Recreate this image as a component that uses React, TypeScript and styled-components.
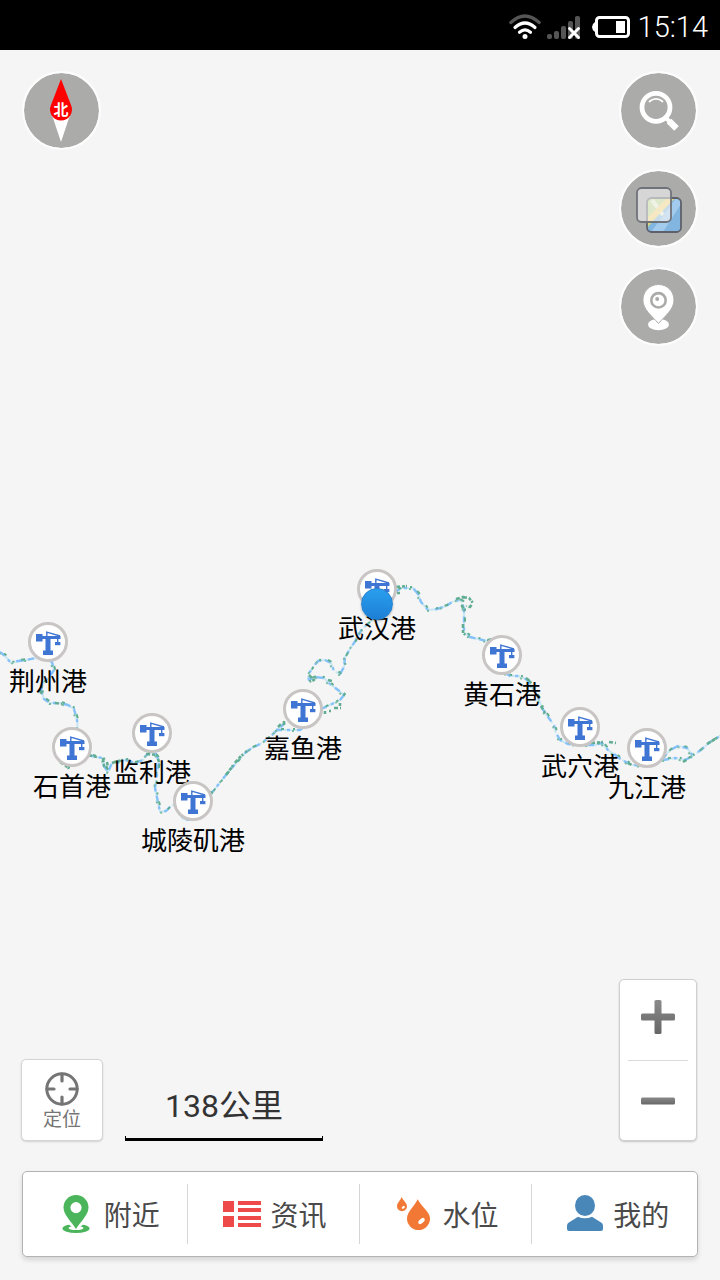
import React from "react";
import styled, { createGlobalStyle } from "styled-components";

const GlobalStyle = createGlobalStyle`
  *, *::before, *::after { box-sizing: border-box; }
  body {
    margin: 0;
    background: #f5f5f5;
    font-family: Roboto, "Noto Sans CJK SC", sans-serif;
  }
  button {
    margin: 0;
    padding: 0;
    border: 0;
    background: none;
    font: inherit;
    color: inherit;
    cursor: pointer;
  }
  svg { display: block; flex: none; }
`;

const Screen = styled.div`
  display: flex;
  flex-direction: column;
  min-height: 100vh;
`;

const StatusBar = styled.header`
  display: flex;
  align-items: center;
  justify-content: flex-end;
  height: 50px;
  padding: 4px 12px 0 0;
  background: #000;
  color: #fff;
`;

const StatusIcons = styled.div`
  display: flex;
  align-items: center;
  gap: 6px;
  margin-right: 8px;
`;

const Battery = styled.svg`
  margin-left: 5px;
`;

const Clock = styled.time`
  font-size: 29px;
  font-weight: 300;
  line-height: 36px;
`;

const MapArea = styled.main`
  position: relative;
  display: flex;
  flex: 1;
  flex-direction: column;
  justify-content: space-between;
  gap: 600px;
  padding: 21px 22px 23px;
  overflow: hidden;
`;

const MapCanvas = styled.div`
  position: absolute;
  top: 0;
  left: 50%;
  width: 720px;
  height: 100%;
  transform: translateX(-50%);
`;

const PortPin = styled.button<{ $x: number; $y: number }>`
  position: absolute;
  left: ${(p) => p.$x - 60}px;
  top: ${(p) => p.$y - 20}px;
  display: flex;
  flex-direction: column;
  align-items: center;
  width: 120px;
`;

const PortBadge = styled.span`
  display: block;
  border: 3px solid #c8c5c4;
  border-radius: 50%;
  background: #fff;
`;

const PortName = styled.span`
  font-size: 26px;
  line-height: 40px;
  white-space: nowrap;
  color: #000;
`;

const HereDot = styled.span<{ $x: number; $y: number }>`
  position: absolute;
  left: ${(p) => p.$x - 16}px;
  top: ${(p) => p.$y - 16}px;
  width: 32px;
  height: 32px;
  border: 1px solid #2483cf;
  border-radius: 50%;
  background: linear-gradient(#2a9fee, #1c7fd6);
  box-shadow: 0 1px 2px rgba(0, 0, 0, 0.3);
`;

const TopControls = styled.div`
  position: relative;
  display: flex;
  align-items: flex-start;
  justify-content: space-between;
`;

const ButtonStack = styled.div`
  display: flex;
  flex-direction: column;
  gap: 19px;
`;

const RoundButton = styled.button`
  width: 79px;
  height: 79px;
  border: 2px solid #fdfdfd;
  border-radius: 50%;
  background: #ababaa;
  background-clip: padding-box;
`;

const BottomControls = styled.div`
  position: relative;
  display: flex;
  flex-direction: column;
  gap: 30px;
`;

const ToolRow = styled.div`
  display: flex;
  align-items: flex-end;
  margin: 0 1px 0 -1px;
`;

const LocateButton = styled.button`
  display: flex;
  flex-direction: column;
  align-items: center;
  justify-content: center;
  gap: 2px;
  width: 82px;
  height: 82px;
  padding-top: 4px;
  border: 1px solid #d5d4d3;
  border-radius: 5px;
  background: #fff;
  box-shadow: 0 1px 2px rgba(0, 0, 0, 0.15);
  font-size: 19px;
  line-height: 24px;
  color: #757575;
`;

const ScaleBar = styled.div`
  width: 198px;
  margin-left: 22px;
  font-size: 32px;
  line-height: 40px;
  text-align: center;
  color: #333;
`;

const ScaleRule = styled.div`
  height: 5px;
  margin-top: 10px;
  border: solid #000;
  border-width: 0 1px 3px;
`;

const ZoomControl = styled.div`
  display: flex;
  flex-direction: column;
  width: 78px;
  margin-left: auto;
  padding: 0 8px;
  border: 1px solid #d0cfce;
  border-radius: 5px;
  background: #fff;
  box-shadow: 0 1px 2px rgba(0, 0, 0, 0.2);
`;

const ZoomButton = styled.button<{ $first?: boolean }>`
  display: flex;
  align-items: center;
  justify-content: center;
  height: 80px;
  padding-bottom: ${(p) => (p.$first ? 6 : 0)}px;

  & + & {
    border-top: 1px solid #d9d9d9;
  }
`;

const TabBar = styled.nav`
  display: grid;
  grid-template-columns: 164fr 172fr 172fr 166fr;
  align-items: center;
  height: 86px;
  border: 1px solid #b4b3b2;
  border-radius: 5px;
  background: #fff;
  box-shadow: 0 3px 5px rgba(0, 0, 0, 0.13);
`;

const Tab = styled.button`
  display: flex;
  align-items: center;
  gap: 8px;
  height: 60px;
  padding-left: 20%;
  font-size: 28px;
  line-height: 40px;
  white-space: nowrap;
  color: #4a4a4a;

  & + & {
    border-left: 1px solid #d6d6d6;
  }
`;

const TabLabel = styled.span`
  padding-top: 5px;
`;

type Port = { name: string; x: number; y: number };

const ports: Port[] = [
  { name: "荆州港", x: 48, y: 592 },
  { name: "石首港", x: 72, y: 697 },
  { name: "监利港", x: 152, y: 683 },
  { name: "城陵矶港", x: 193, y: 751 },
  { name: "嘉鱼港", x: 303, y: 659 },
  { name: "武汉港", x: 377, y: 539 },
  { name: "黄石港", x: 502, y: 605 },
  { name: "武穴港", x: 580, y: 677 },
  { name: "九江港", x: 647, y: 698 },
];

const riverReaches = [
  "M0 652 5 656 11 663 18 661 26 660 36 658 45 659 52 662 54 670 50 676 44 682 41 690 44 699 50 703 60 703 68 705 74 709 77 720 78 731",
  "M88 755 96 757 103 758 104 766 108 772 112 763 118 762 126 760 135 763 143 760 148 753 156 754 159 762 157 774 155 788 158 802 160 812 166 811 170 807 176 804",
  "M180 812 183 819 190 820",
  "M210 795 214 790 222 780 230 770 238 761 246 752 252 748 262 743 272 735 277 730 284 724",
  "M276 730 300 730 305 726",
  "M321 709 330 705 340 700 344 695 338 690 330 684 324 678 315 677 309 680 308 675 313 667 318 661 325 660 331 663 334 671 340 674 344 667 345 657 350 649 356 640 362 629 370 622 377 615",
  "M394 592 402 588 413 588 418 594 421 602 428 610 437 609 446 606 455 600 462 601 464 610 464 625 464 632 470 637 478 639 487 641 495 638",
  "M505 673 510 676 518 676 526 679 532 686 538 697 542 708 548 717 554 725 556 733 560 740 568 744 582 745 595 745 602 743 608 750 614 754 622 760 632 765 645 766 658 762 664 757 670 750 678 746 687 748 693 756 702 749 710 742 720 736",
  "M663 760 675 758 685 760 693 756",
];

const riverBanks = [
  "M60 762 65 765 68 768 73 765 M66 766H72",
  "M41 694 42 684 M55 703 62 704",
  "M88 755 97 757 M103 758 104 766 108 768 107 762 M112 763 122 760 122 764 M146 754 157 755 159 762",
  "M210 792 213 793 M226 775 234 764 240 757 247 751 M278 727 282 723 M284 721V725",
  "M309 675 314 680 308 682 M328 680 332 681 M334 708H341 M340 703V706 M325 714V711 M329 711H331",
  "M396 587 407 586 M397 593H400 M456 599 463 597 463 601 462 606 465 611 M463 597 469 598 473 603 470 607 466 606 M463 624V633L467 636",
  "M526 678 531 682 M541 706 545 713 M591 743 605 742 M609 742 616 743 M628 763 632 765",
  "M683 762 688 759 M707 744 720 736",
];

function River() {
  return (
    <svg
      width="720"
      height="850"
      viewBox="0 50 720 850"
      fill="none"
      strokeLinejoin="round"
      aria-hidden="true"
    >
      {riverReaches.map((d) => (
        <g key={d}>
          <path d={d} stroke="#c8e6f4" strokeWidth="2" strokeDasharray="16 2 9 2" />
          <path d={d} stroke="#86c2fa" strokeWidth="2.400" strokeDasharray="6 5 3 7 8 4" />
          <path
            d={d}
            stroke="#5fae90"
            strokeWidth="2"
            strokeDasharray="3 9 2 7 4 13"
            strokeDashoffset="-4"
            transform="translate(1 -1)"
          />
          <path
            d={d}
            stroke="#78bba3"
            strokeWidth="2"
            strokeDasharray="2 15 2 11"
            transform="translate(-1 1)"
          />
        </g>
      ))}
      {riverBanks.map((d) => (
        <path key={d} d={d} stroke="#62ad92" strokeWidth="2.600" strokeDasharray="4 2 3 1 2 3" />
      ))}
    </svg>
  );
}

function CraneIcon() {
  return (
    <svg width="34" height="34" viewBox="0 0 34 34" fill="#3f75d3" aria-hidden="true">
      <rect x="5" y="9" width="6.500" height="7.500" />
      <rect x="11" y="11" width="18.500" height="3" />
      <path d="M15.800 11V7.200L29 11" fill="none" stroke="#3f75d3" strokeWidth="1.400" />
      <rect x="14.500" y="11" width="5" height="15" />
      <rect x="12" y="25.500" width="10" height="4.500" />
      <rect x="26" y="13" width="1.400" height="5" />
      <rect x="24" y="17" width="5.400" height="3.200" />
    </svg>
  );
}

function CompassIcon() {
  return (
    <svg width="75" height="75" viewBox="0 0 75 75" aria-hidden="true">
      <path d="M28 42 37 69 46 42z" fill="#fff" />
      <path d="M37 6 27 32a11 11 0 1 0 20 0z" fill="#f00" />
      <text x="37" y="42" fontSize="15" fontWeight="700" textAnchor="middle" fill="#fff">
        北
      </text>
    </svg>
  );
}

function SearchIcon() {
  return (
    <svg width="75" height="75" viewBox="0 0 75 75" fill="none" stroke="#fff" aria-hidden="true">
      <circle cx="35" cy="34.300" r="14" strokeWidth="4.800" />
      <path d="M28.500 28.500a9.500 9.500 0 0 1 13 0" strokeWidth="1.800" strokeLinecap="round" />
      <path d="M44 44 49 49" strokeWidth="4" />
      <path d="M48 48 55.500 55.500" strokeWidth="6.500" />
    </svg>
  );
}

function LayersIcon() {
  return (
    <svg width="75" height="75" viewBox="0 0 75 75" aria-hidden="true">
      <defs>
        <clipPath id="tile">
          <rect x="26" y="27" width="34" height="34" rx="4" />
        </clipPath>
      </defs>
      <g clipPath="url(#tile)">
        <path d="M26 27h34v34H26z" fill="#82b6e1" />
        <path d="M26 27h28L26 57z" fill="#bcd98c" />
        <path d="M31 29 42 44" stroke="#e9efd5" strokeWidth="4" />
        <path d="M26 47 46 27h8L26 55z" fill="#f8d67a" />
        <path d="M42 61 60 33v-6h-5L30 61z" fill="#a3cbee" />
      </g>
      <rect x="26" y="27" width="34" height="34" rx="4.500" fill="none" stroke="#5e616b" strokeWidth="1.800" />
      <rect
        x="16"
        y="17"
        width="34"
        height="34"
        rx="4.500"
        fill="#f4f4f4"
        fillOpacity="0.600"
        stroke="#70727a"
        strokeWidth="1.800"
      />
    </svg>
  );
}

function PlaceIcon() {
  return (
    <svg width="75" height="75" viewBox="0 0 75 75" aria-hidden="true">
      <ellipse cx="37.500" cy="55.500" rx="10.500" ry="5.800" fill="#fff" />
      <path
        d="M37.500 15.500c-9 0-15.600 7-15.600 15.500 0 9.500 9 16 15.600 23.500C44 47 53 40.500 53 31c0-8.500-6.500-15.500-15.500-15.500z"
        fill="#fff"
        stroke="#ababaa"
        strokeWidth="1"
      />
      <circle cx="37.500" cy="31.300" r="7.200" fill="none" stroke="#ababaa" strokeWidth="2.600" />
      <circle cx="36.200" cy="30" r="2" fill="#ababaa" />
    </svg>
  );
}

function TargetIcon() {
  return (
    <svg width="34" height="34" viewBox="0 0 34 34" fill="none" stroke="#757575" aria-hidden="true">
      <circle cx="17" cy="17" r="15.200" strokeWidth="3" />
      <path d="M17 2v7M17 25v7M2 17h7M25 17h7" strokeWidth="3.200" strokeLinecap="round" />
    </svg>
  );
}

function ZoomGlyph({ plus }: { plus?: boolean }) {
  const id = plus ? "plusFill" : "minusFill";
  return (
    <svg width="34" height="34" viewBox="0 0 34 34" aria-hidden="true">
      <defs>
        <linearGradient id={id} x1="0" y1={plus ? 0 : 13} x2="0" y2={plus ? 34 : 21} gradientUnits="userSpaceOnUse">
          <stop offset="0" stopColor="#8a8a8a" />
          <stop offset="1" stopColor="#666" />
        </linearGradient>
      </defs>
      <rect x="0" y="13.500" width="34" height="7" rx="1.500" fill={`url(#${id})`} />
      {plus && <rect x="13.500" y="0" width="7" height="34" rx="1.500" fill={`url(#${id})`} />}
    </svg>
  );
}

function NearbyIcon() {
  return (
    <svg width="40" height="40" viewBox="0 0 40 40" aria-hidden="true">
      <ellipse cx="20" cy="34.500" rx="13.500" ry="4.500" fill="#4bb55c" />
      <ellipse cx="20" cy="34" rx="7.500" ry="2" fill="#fff" />
      <path d="M10 28h20l-6 5h-8z" fill="#fff" />
      <path
        fillRule="evenodd"
        d="M20 1C13 1 7.500 6.500 7.500 13.500c0 7.500 8 14 12.500 21.500 4.500-7.500 12.500-14 12.500-21.500C32.500 6.500 27 1 20 1zm0 7a5.600 5.600 0 1 1 0 11.200A5.600 5.600 0 0 1 20 8z"
        fill="#4bb55c"
      />
    </svg>
  );
}

function NewsIcon() {
  return (
    <svg width="40" height="40" viewBox="0 0 40 40" fill="#ee4a49" aria-hidden="true">
      <path d="M1 7h11v11H1zM1 22h11v11H1zM16 7h23v4H16zM16 14h23v4H16zM16 22h23v4H16zM16 29h23v4H16z" />
    </svg>
  );
}

function WaterIcon() {
  return (
    <svg width="40" height="40" viewBox="0 0 40 40" fill="#f27935" aria-hidden="true">
      <path d="M7.700 3C6 7 3 9 3 12.300a5 5 0 0 0 10 0C13 9 9.500 7 7.700 3z" />
      <path d="M23.700 5.300C20 13 13 18 13 24.500a11.500 11.500 0 0 0 23 0C36 18 27.500 13 23.700 5.300z" />
      <ellipse cx="9.300" cy="13.300" rx="1.800" ry="1.100" transform="rotate(-40 9.300 13.300)" fill="#fff" />
      <ellipse cx="27.500" cy="27" rx="3.800" ry="2.100" transform="rotate(-42 27.500 27)" fill="#fff" />
    </svg>
  );
}

function MineIcon() {
  return (
    <svg width="40" height="40" viewBox="0 0 40 40" fill="#4a87b9" aria-hidden="true">
      <ellipse cx="20" cy="11.500" rx="10" ry="10.500" />
      <path d="M13 22.800q7 3 14 0l9.500 6q1.500 1 1.500 3V35q0 2-2 2H4q-2 0-2-2v-3.200q0-2 1.500-3z" />
    </svg>
  );
}

function StatusGlyphs() {
  return (
    <StatusIcons>
      <svg width="32" height="26" viewBox="0 0 32 26" fill="none" strokeWidth="3.200" strokeLinecap="round" aria-hidden="true">
        <path d="M1.800 8.500q14-13 28.400 0" stroke="#555" />
        <path d="M6 13.500q10-9 20 0M10.500 18.200q5.500-4.500 11 0" stroke="#fff" />
        <circle cx="16" cy="22.600" r="2.500" fill="#fff" />
      </svg>
      <svg width="34" height="26" viewBox="0 0 34 26" aria-hidden="true">
        <g fill="#555">
          <rect x="0" y="20" width="5" height="5" rx="2" />
          <rect x="7" y="17" width="5" height="8" rx="2" />
          <rect x="14" y="12" width="5" height="13" rx="2" />
          <rect x="21" y="7" width="5" height="18" rx="2" />
          <rect x="28" y="2" width="5" height="23" rx="2" />
        </g>
        <path d="M22.500 14.500 31.500 23.500M31.500 14.500 22.500 23.500" stroke="#fff" strokeWidth="3" strokeLinecap="round" />
      </svg>
      <Battery width="38" height="24" viewBox="0 0 38 24" aria-hidden="true">
        <path d="M4.500 7H3Q0 9 0 12t3 5h1.500z" fill="#fff" />
        <rect x="4.500" y="2.500" width="32" height="19" rx="3" fill="none" stroke="#fff" strokeWidth="3" />
        <rect x="24" y="6" width="9" height="12" fill="#fff" />
      </Battery>
    </StatusIcons>
  );
}

export default function App() {
  return (
    <>
      <GlobalStyle />
      <Screen>
        <StatusBar>
          <StatusGlyphs />
          <Clock>15:14</Clock>
        </StatusBar>
        <MapArea>
          <MapCanvas>
            <River />
            {ports.map((port) => (
              <PortPin key={port.name} type="button" $x={port.x} $y={port.y}>
                <PortBadge>
                  <CraneIcon />
                </PortBadge>
                <PortName>{port.name}</PortName>
              </PortPin>
            ))}
            <HereDot $x={377} $y={554} />
          </MapCanvas>
          <TopControls>
            <RoundButton type="button" aria-label="指北针">
              <CompassIcon />
            </RoundButton>
            <ButtonStack>
              <RoundButton type="button" aria-label="搜索">
                <SearchIcon />
              </RoundButton>
              <RoundButton type="button" aria-label="图层">
                <LayersIcon />
              </RoundButton>
              <RoundButton type="button" aria-label="地点">
                <PlaceIcon />
              </RoundButton>
            </ButtonStack>
          </TopControls>
          <BottomControls>
            <ToolRow>
              <LocateButton type="button">
                <TargetIcon />
                定位
              </LocateButton>
              <ScaleBar>
                138公里
                <ScaleRule />
              </ScaleBar>
              <ZoomControl>
                <ZoomButton type="button" aria-label="放大" $first>
                  <ZoomGlyph plus />
                </ZoomButton>
                <ZoomButton type="button" aria-label="缩小">
                  <ZoomGlyph />
                </ZoomButton>
              </ZoomControl>
            </ToolRow>
            <TabBar>
              <Tab type="button">
                <NearbyIcon />
                <TabLabel>附近</TabLabel>
              </Tab>
              <Tab type="button">
                <NewsIcon />
                <TabLabel>资讯</TabLabel>
              </Tab>
              <Tab type="button">
                <WaterIcon />
                <TabLabel>水位</TabLabel>
              </Tab>
              <Tab type="button">
                <MineIcon />
                <TabLabel>我的</TabLabel>
              </Tab>
            </TabBar>
          </BottomControls>
        </MapArea>
      </Screen>
    </>
  );
}
